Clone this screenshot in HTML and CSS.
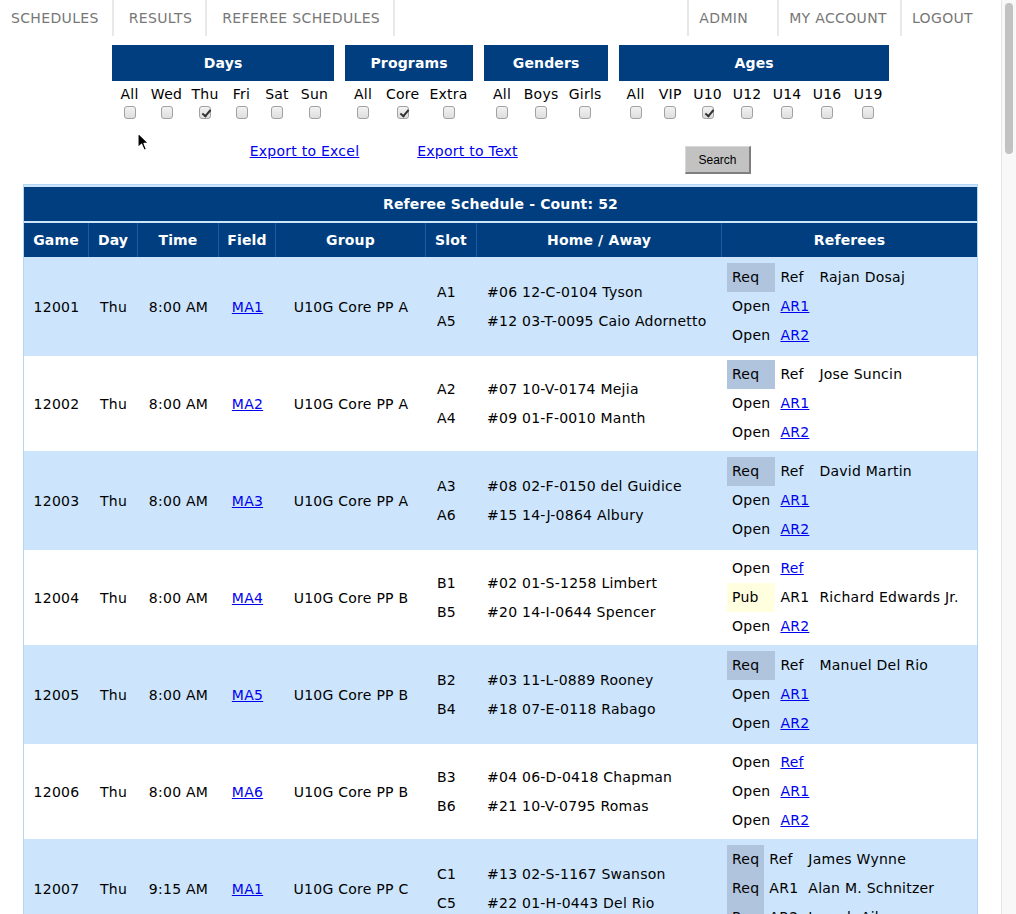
FILE: index.html
```html
<!DOCTYPE html>
<html lang="en">
<head>
<meta charset="utf-8">
<title>Referee Schedules</title>
<link rel="stylesheet" href="styles.css">
</head>
<body>
<div class="frame">
  <div class="page">
    <nav class="topnav">
      <div class="nav-left">
        <a class="nav-item first" href="#">SCHEDULES</a>
        <a class="nav-item" href="#">RESULTS</a>
        <a class="nav-item" href="#">REFEREE SCHEDULES</a>
      </div>
      <div class="nav-right">
        <a class="nav-item admin" href="#">ADMIN</a>
        <a class="nav-item" href="#">MY ACCOUNT</a>
        <a class="nav-item last" href="#">LOGOUT</a>
      </div>
    </nav>

    <div class="filters">
      <table class="filter f-days">
        <colgroup><col class="w35"><col class="w39"><col class="w38"><col class="w35"><col class="w36"><col class="w39"></colgroup>
        <tr><th colspan="6">Days</th></tr>
        <tr class="labels"><td>All</td><td>Wed</td><td>Thu</td><td>Fri</td><td>Sat</td><td>Sun</td></tr>
        <tr class="checks"><td><input class="cb" type="checkbox"></td><td><input class="cb" type="checkbox"></td><td><input class="cb" type="checkbox" checked></td><td><input class="cb" type="checkbox"></td><td><input class="cb" type="checkbox"></td><td><input class="cb" type="checkbox"></td></tr>
      </table>
      <table class="filter f-programs">
        <colgroup><col class="w36"><col class="w43"><col class="w49"></colgroup>
        <tr><th colspan="3">Programs</th></tr>
        <tr class="labels"><td>All</td><td>Core</td><td>Extra</td></tr>
        <tr class="checks"><td><input class="cb" type="checkbox"></td><td><input class="cb" type="checkbox" checked></td><td><input class="cb" type="checkbox"></td></tr>
      </table>
      <table class="filter f-genders">
        <colgroup><col class="w36"><col class="w42"><col class="w46"></colgroup>
        <tr><th colspan="3">Genders</th></tr>
        <tr class="labels"><td>All</td><td>Boys</td><td>Girls</td></tr>
        <tr class="checks"><td><input class="cb" type="checkbox"></td><td><input class="cb" type="checkbox"></td><td><input class="cb" type="checkbox"></td></tr>
      </table>
      <table class="filter f-ages">
        <colgroup><col class="w33"><col class="w36"><col class="w39"><col class="w40"><col class="w40"><col class="w40"><col class="w42"></colgroup>
        <tr><th colspan="7">Ages</th></tr>
        <tr class="labels"><td>All</td><td>VIP</td><td>U10</td><td>U12</td><td>U14</td><td>U16</td><td>U19</td></tr>
        <tr class="checks"><td><input class="cb" type="checkbox"></td><td><input class="cb" type="checkbox"></td><td><input class="cb" type="checkbox" checked></td><td><input class="cb" type="checkbox"></td><td><input class="cb" type="checkbox"></td><td><input class="cb" type="checkbox"></td><td><input class="cb" type="checkbox"></td></tr>
      </table>
    </div>

    <div class="actions">
      <div class="act act-excel"><a href="#">Export to Excel</a></div>
      <div class="act act-text"><a href="#">Export to Text</a></div>
      <div class="act act-search"><button class="search-btn" type="button">Search</button></div>
    </div>

    <table class="sched">
      <colgroup>
        <col class="c-game"><col class="c-day"><col class="c-time"><col class="c-field"><col class="c-group"><col class="c-slot"><col class="c-teams"><col class="c-refs">
      </colgroup>
      <tr class="title-row"><th colspan="8">Referee Schedule - Count: 52</th></tr>
      <tr class="head-row"><th>Game</th><th>Day</th><th>Time</th><th>Field</th><th>Group</th><th>Slot</th><th>Home / Away</th><th class="last">Referees</th></tr>

      <tr class="odd">
        <td>12001</td><td>Thu</td><td>8:00 AM</td><td><a href="#">MA1</a></td><td>U10G Core PP A</td>
        <td class="slot"><div class="ln">A1</div><div class="ln">A5</div></td>
        <td class="teams"><div class="ln">#06 12-C-0104 Tyson</div><div class="ln">#12 03-T-0095 Caio Adornetto</div></td>
        <td class="refs"><table class="ref">
          <tr><td class="req">Req</td><td>Ref</td><td>Rajan Dosaj</td></tr>
          <tr><td>Open</td><td><a href="#">AR1</a></td><td></td></tr>
          <tr><td>Open</td><td><a href="#">AR2</a></td><td></td></tr>
        </table></td>
      </tr>

      <tr class="even">
        <td>12002</td><td>Thu</td><td>8:00 AM</td><td><a href="#">MA2</a></td><td>U10G Core PP A</td>
        <td class="slot"><div class="ln">A2</div><div class="ln">A4</div></td>
        <td class="teams"><div class="ln">#07 10-V-0174 Mejia</div><div class="ln">#09 01-F-0010 Manth</div></td>
        <td class="refs"><table class="ref">
          <tr><td class="req">Req</td><td>Ref</td><td>Jose Suncin</td></tr>
          <tr><td>Open</td><td><a href="#">AR1</a></td><td></td></tr>
          <tr><td>Open</td><td><a href="#">AR2</a></td><td></td></tr>
        </table></td>
      </tr>

      <tr class="odd">
        <td>12003</td><td>Thu</td><td>8:00 AM</td><td><a href="#">MA3</a></td><td>U10G Core PP A</td>
        <td class="slot"><div class="ln">A3</div><div class="ln">A6</div></td>
        <td class="teams"><div class="ln">#08 02-F-0150 del Guidice</div><div class="ln">#15 14-J-0864 Albury</div></td>
        <td class="refs"><table class="ref">
          <tr><td class="req">Req</td><td>Ref</td><td>David Martin</td></tr>
          <tr><td>Open</td><td><a href="#">AR1</a></td><td></td></tr>
          <tr><td>Open</td><td><a href="#">AR2</a></td><td></td></tr>
        </table></td>
      </tr>

      <tr class="even">
        <td>12004</td><td>Thu</td><td>8:00 AM</td><td><a href="#">MA4</a></td><td>U10G Core PP B</td>
        <td class="slot"><div class="ln">B1</div><div class="ln">B5</div></td>
        <td class="teams"><div class="ln">#02 01-S-1258 Limbert</div><div class="ln">#20 14-I-0644 Spencer</div></td>
        <td class="refs"><table class="ref">
          <tr><td>Open</td><td><a href="#">Ref</a></td><td></td></tr>
          <tr><td class="pub">Pub</td><td>AR1</td><td>Richard Edwards Jr.</td></tr>
          <tr><td>Open</td><td><a href="#">AR2</a></td><td></td></tr>
        </table></td>
      </tr>

      <tr class="odd">
        <td>12005</td><td>Thu</td><td>8:00 AM</td><td><a href="#">MA5</a></td><td>U10G Core PP B</td>
        <td class="slot"><div class="ln">B2</div><div class="ln">B4</div></td>
        <td class="teams"><div class="ln">#03 11-L-0889 Rooney</div><div class="ln">#18 07-E-0118 Rabago</div></td>
        <td class="refs"><table class="ref">
          <tr><td class="req">Req</td><td>Ref</td><td>Manuel Del Rio</td></tr>
          <tr><td>Open</td><td><a href="#">AR1</a></td><td></td></tr>
          <tr><td>Open</td><td><a href="#">AR2</a></td><td></td></tr>
        </table></td>
      </tr>

      <tr class="even">
        <td>12006</td><td>Thu</td><td>8:00 AM</td><td><a href="#">MA6</a></td><td>U10G Core PP B</td>
        <td class="slot"><div class="ln">B3</div><div class="ln">B6</div></td>
        <td class="teams"><div class="ln">#04 06-D-0418 Chapman</div><div class="ln">#21 10-V-0795 Romas</div></td>
        <td class="refs"><table class="ref">
          <tr><td>Open</td><td><a href="#">Ref</a></td><td></td></tr>
          <tr><td>Open</td><td><a href="#">AR1</a></td><td></td></tr>
          <tr><td>Open</td><td><a href="#">AR2</a></td><td></td></tr>
        </table></td>
      </tr>

      <tr class="odd">
        <td>12007</td><td>Thu</td><td>9:15 AM</td><td><a href="#">MA1</a></td><td>U10G Core PP C</td>
        <td class="slot"><div class="ln">C1</div><div class="ln">C5</div></td>
        <td class="teams"><div class="ln">#13 02-S-1167 Swanson</div><div class="ln">#22 01-H-0443 Del Rio</div></td>
        <td class="refs"><table class="ref">
          <tr><td class="req">Req</td><td>Ref</td><td>James Wynne</td></tr>
          <tr><td class="req">Req</td><td>AR1</td><td>Alan M. Schnitzer</td></tr>
          <tr><td class="req">Req</td><td>AR2</td><td>Joseph Aiken</td></tr>
        </table></td>
      </tr>
    </table>

    <svg class="cursor" width="13" height="20" viewBox="0 0 13 20" aria-hidden="true">
      <path d="M1 1 L1 15.5 L4.6 12.2 L7.2 18.2 L9.4 17.2 L6.9 11.4 L11.6 11.4 Z" fill="#000" stroke="#fff" stroke-width="1.1" stroke-linejoin="round"/>
    </svg>
  </div>
  <div class="scrollbar"><div class="thumb"></div></div>
</div>
</body>
</html>
```

FILE: styles.css
```css
html, body {
  margin: 0;
  padding: 0;
  height: 100%;
  overflow: hidden;
  background: #fff;
}

body {
  font-family: "DejaVu Sans", Verdana, sans-serif;
  font-size: 14px;
  letter-spacing: 0.25px;
  color: #000;
}

.frame {
  display: flex;
  height: 914px;
  overflow: hidden;
}

.page {
  position: relative;
  flex: 1 1 auto;
  width: 1001px;
  overflow: hidden;
}

/* top navigation */
.topnav {
  display: flex;
  justify-content: space-between;
  height: 36px;
}

.nav-left, .nav-right {
  display: flex;
}

.nav-item {
  display: block;
  line-height: 36px;
  color: #777;
  text-decoration: none;
  font-size: 14px;
  letter-spacing: 0.35px;
}

.nav-left .nav-item {
  padding: 0 13px 0 15px;
  border-right: 2px solid #e8e8e8;
}

.nav-left .nav-item.first {
  padding-left: 11px;
}

.nav-right .nav-item {
  padding: 0 13px 0 10px;
  border-left: 2px solid #e8e8e8;
}

.nav-right .nav-item.admin {
  padding-right: 29px;
}

.nav-right .nav-item.last {
  padding-right: 28px;
}

/* filters */
.filters {
  display: flex;
  width: 777px;
  margin: 9px auto 0;
  gap: 11px;
}

.filter {
  border-collapse: collapse;
  border-spacing: 0;
  table-layout: fixed;
}

.f-days { width: 222px; }
.f-programs { width: 128px; }
.f-genders { width: 124px; }
.f-ages { width: 270px; }

.w33 { width: 33px; }
.w35 { width: 35px; }
.w36 { width: 36px; }
.w38 { width: 38px; }
.w39 { width: 39px; }
.w40 { width: 40px; }
.w42 { width: 42px; }
.w43 { width: 43px; }
.w46 { width: 46px; }
.w49 { width: 49px; }

.filter th {
  height: 36px;
  padding: 0;
  background: #003e80;
  color: #fff;
  font-weight: bold;
  font-size: 14px;
  letter-spacing: 0.15px;
}

.filter td {
  padding: 0;
  text-align: center;
  white-space: nowrap;
}

.filter .labels td {
  padding-top: 5px;
  line-height: 17px;
}

.filter .checks td {
  padding-top: 2px;
  height: 14px;
  line-height: 0;
}

.cb {
  appearance: none;
  -webkit-appearance: none;
  position: relative;
  display: inline-block;
  width: 12px;
  height: 13px;
  margin: 0;
  border: 1px solid #a2a2a2;
  border-radius: 3px;
  background: linear-gradient(#f2f2f2, #dedede);
  vertical-align: top;
}

.cb:checked::after {
  content: "";
  position: absolute;
  left: 4px;
  top: 1px;
  width: 3px;
  height: 7px;
  border: solid #333;
  border-width: 0 2px 2px 0;
  transform: rotate(40deg);
}

/* actions */
.actions {
  display: flex;
  align-items: flex-start;
  width: 777px;
  margin: 24px auto 0;
}

.act {
  text-align: center;
}

.act-excel {
  width: 181px;
  margin-left: 102px;
}

.act-text {
  width: 145px;
}

.act-search {
  width: 120px;
  margin-left: 118px;
  padding-top: 3px;
}

.actions a {
  color: #0000ee;
  text-decoration: underline;
  line-height: 17px;
}

.search-btn {
  width: 66px;
  height: 28px;
  padding: 0;
  font-family: "Liberation Sans", Arial, sans-serif;
  font-size: 12px;
  letter-spacing: 0;
  color: #000;
  background: #c2c2c2;
  border-style: solid;
  border-width: 1px 2px 2px 1px;
  border-color: #d8d8d8 #7f7f7f #7f7f7f #d8d8d8;
}

/* schedule table */
.sched {
  width: 955px;
  margin: 10px auto 0;
  table-layout: fixed;
  border-collapse: separate;
  border-spacing: 0 2px;
  background: #cce5fc;
  border: 1px solid #b3d6f3;
}

.c-game { width: 65px; }
.c-day { width: 49px; }
.c-time { width: 81px; }
.c-field { width: 57px; }
.c-group { width: 150px; }
.c-slot { width: 51px; }
.c-teams { width: 245px; }
.c-refs { width: 255px; }

.sched th {
  background: #003e80;
  color: #fff;
  font-weight: bold;
  font-size: 14px;
  letter-spacing: 0.15px;
  padding: 0;
  text-align: center;
}

.title-row th {
  height: 34px;
}

.head-row th {
  height: 34px;
  border-right: 1px solid #1f59a3;
}

.head-row th.last {
  border-right: none;
}

.sched > tbody > tr > td {
  padding: 4px 0;
  text-align: center;
  vertical-align: middle;
  white-space: nowrap;
}

.sched > tbody > tr.even > td {
  background: #fff;
}

.sched a {
  color: #0000ee;
  text-decoration: underline;
}

.ln {
  line-height: 29px;
}

.sched > tbody > tr > td.slot {
  text-align: left;
  padding-left: 11px;
}

.sched > tbody > tr > td.teams {
  text-align: left;
  padding-left: 10px;
}

.sched > tbody > tr > td.refs {
  text-align: left;
  padding: 4px 5px;
}

.ref {
  border-collapse: collapse;
  border-spacing: 0;
}

.ref td {
  height: 29px;
  padding: 0 5px;
  line-height: 17px;
  text-align: left;
  vertical-align: middle;
  white-space: nowrap;
}

.ref td.req {
  background: #b0c4de;
}

.ref td.pub {
  background: #ffffe0;
}

/* mouse pointer shown in the capture */
.cursor {
  position: absolute;
  left: 137px;
  top: 132px;
}

/* scrollbar */
.scrollbar {
  flex: 0 0 14px;
  width: 14px;
  background: #f8f8f8;
  border-left: 1px solid #e6e6e6;
}

.thumb {
  width: 8px;
  height: 151px;
  margin: 3px 3px 0 3px;
  border-radius: 4px;
  background: #c2c2c2;
}
```
